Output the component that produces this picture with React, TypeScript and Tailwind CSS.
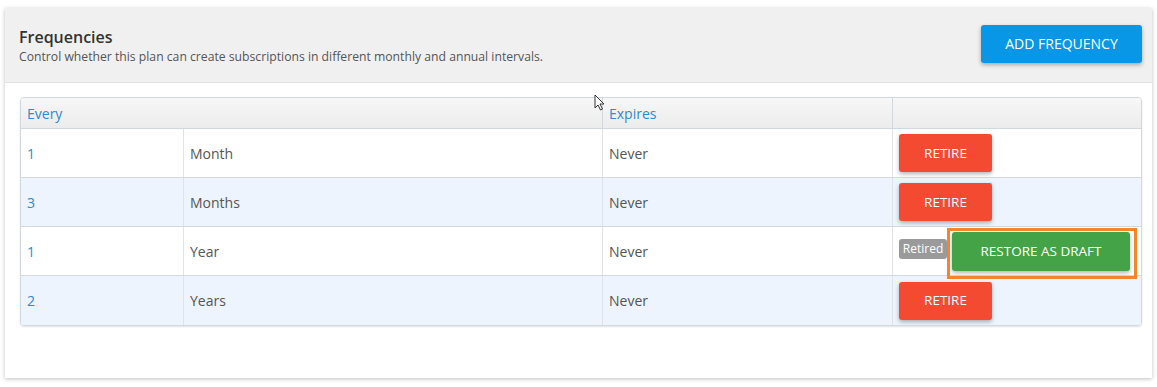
import React from "react";

const rows = [
  { every: "1", unit: "Month", expires: "Never", retired: false },
  { every: "3", unit: "Months", expires: "Never", retired: false },
  { every: "1", unit: "Year", expires: "Never", retired: true },
  { every: "2", unit: "Years", expires: "Never", retired: false },
];

const RetireButton = () => (
  <button className="w-[93px] h-[38px] rounded-[3px] bg-[#f44a32] text-white text-[13.5px] shadow-[0_2px_4px_rgba(0,0,0,0.3)]">
    RETIRE
  </button>
);

export default function App() {
  return (
    <div
      className="relative w-[1157px] h-[387px] bg-white pt-[8px] pl-[5px]"
      style={{ fontFamily: '"Open Sans", "Noto Sans", sans-serif' }}
    >
      <div className="w-[1147px] h-[370px] bg-white shadow-[0_1px_4px_rgba(0,0,0,0.25)]">
        <div className="h-[75px] bg-[#f0f0f1] border-b border-[#e2e2e4] flex items-center justify-between pl-[14px] pr-[10px]">
          <div className="mt-[2px]">
            <div className="text-[16px] font-semibold text-[#333] leading-[22px]">Frequencies</div>
            <div className="text-[12.2px] text-[#555] leading-[18px]">
              Control whether this plan can create subscriptions in different monthly and annual intervals.
            </div>
          </div>
          <button className="w-[161px] h-[38px] -mt-[3px] rounded-[3px] bg-[#0896e6] text-white text-[14px] shadow-[0_2px_4px_rgba(0,0,0,0.3)]">
            ADD FREQUENCY
          </button>
        </div>

        <div className="pt-[14px] pl-[15px]">
          <div className="w-[1122px] border border-[#d3d8df] rounded-[4px] overflow-hidden shadow-[0_1px_2px_rgba(0,0,0,0.12)] text-[14px]">
            <div className="grid grid-cols-[582px_290px_1fr] h-[31px] bg-gradient-to-b from-[#f7f7f7] to-[#ececec] border-b border-[#d3d8df] text-[#2b8bd3]">
              <div className="px-[6px] flex items-center border-r border-[#d3d8df]">Every</div>
              <div className="px-[6px] flex items-center border-r border-[#d3d8df]">Expires</div>
              <div />
            </div>
            {rows.map((r, i) => (
              <div
                key={i}
                className={`grid grid-cols-[163px_419px_290px_1fr] h-[49px] ${
                  i % 2 === 1 ? "bg-[#edf4fd]" : "bg-white"
                } ${i < rows.length - 1 ? "border-b border-[#d3d8df]" : ""}`}
              >
                <div className="px-[6px] flex items-center text-[#2b8bd3] border-r border-[#dfe3e8]">{r.every}</div>
                <div className="px-[6px] flex items-center text-[#555] border-r border-[#dfe3e8]">{r.unit}</div>
                <div className="px-[6px] flex items-center text-[#555] border-r border-[#dfe3e8]">{r.expires}</div>
                <div className="pl-[6px] flex items-center">
                  {r.retired ? (
                    <div className="flex items-center gap-[5px]">
                      <span className="h-[20px] w-[48px] -mt-[4px] text-center rounded-[3px] bg-[#9a9a9a] text-white text-[12px] leading-[20px]">
                        Retired
                      </span>
                      <div className="relative">
                        <button className="w-[178px] h-[39px] rounded-[3px] bg-[#44a247] text-white text-[13.5px] shadow-[0_2px_4px_rgba(0,0,0,0.3)]">
                          RESTORE AS DRAFT
                        </button>
                        <span className="absolute -left-[5px] -top-[4px] -right-[7px] -bottom-[8px] border-[3px] border-[#f5852a] pointer-events-none" />
                      </div>
                    </div>
                  ) : (
                    <RetireButton />
                  )}
                </div>
              </div>
            ))}
          </div>
        </div>
      </div>

      <svg className="absolute left-[594px] top-[94px]" width="12" height="18" viewBox="0 0 12 18">
        <path d="M1 1 L1 14 L4 11 L6.5 16 L8.5 15 L6 10 L10 10 Z" fill="white" stroke="#333" strokeWidth="1" />
      </svg>
    </div>
  );
}
